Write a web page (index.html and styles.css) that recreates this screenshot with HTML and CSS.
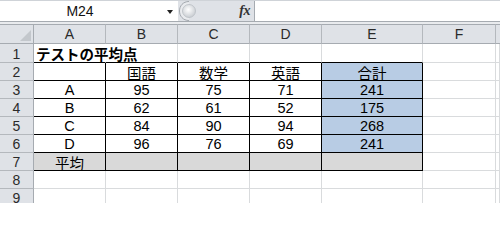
FILE: index.html
```html
<!DOCTYPE html>
<html lang="ja">
<head>
<meta charset="utf-8">
<link rel="stylesheet" href="styles.css">
</head>
<body>
<div class="app">
  <div class="fbar">
    <div class="namebox"><span class="ref">M24</span><span class="arrow"></span></div>
    <div class="pill">
      <svg class="bubble" width="20" height="20" viewBox="0 0 20 20">
        <defs>
          <radialGradient id="g" cx="0.45" cy="0.4" r="0.6">
            <stop offset="0" stop-color="#ffffff"/>
            <stop offset="1" stop-color="#c9cdd2"/>
          </radialGradient>
        </defs>
        <path d="M11 0.5 C5 0.5 1.5 5 1.5 10 C1.5 15 5 19.5 11 19.5" fill="#e9ebee" stroke="#a3a8ae" stroke-width="1"/>
        <circle cx="11" cy="10" r="6.5" fill="url(#g)" stroke="#b9bec3" stroke-width="0.8"/>
      </svg>
      <span class="fx">fx</span>
    </div>
    <div class="input"></div>
  </div>
  <div class="gap"></div>
  <div class="sheet">
    <div class="h corner"><span class="tri"></span></div>
    <div class="h">A</div><div class="h">B</div><div class="h">C</div><div class="h">D</div><div class="h">E</div><div class="h">F</div><div class="h last"></div>

    <div class="rh">1</div>
    <div class="c bb a1"><span class="title">テストの平均点</span></div><div class="c bb"></div><div class="c bb"></div><div class="c bb"></div><div class="c bb"></div><div class="c"></div><div class="c"></div>

    <div class="rh">2</div>
    <div class="c b"></div><div class="c b">国語</div><div class="c b">数学</div><div class="c b">英語</div><div class="c b blue">合計</div><div class="c"></div><div class="c"></div>

    <div class="rh">3</div>
    <div class="c b">A</div><div class="c b">95</div><div class="c b">75</div><div class="c b">71</div><div class="c b blue">241</div><div class="c"></div><div class="c"></div>

    <div class="rh">4</div>
    <div class="c b">B</div><div class="c b">62</div><div class="c b">61</div><div class="c b">52</div><div class="c b blue">175</div><div class="c"></div><div class="c"></div>

    <div class="rh">5</div>
    <div class="c b">C</div><div class="c b">84</div><div class="c b">90</div><div class="c b">94</div><div class="c b blue">268</div><div class="c"></div><div class="c"></div>

    <div class="rh">6</div>
    <div class="c b">D</div><div class="c b">96</div><div class="c b">76</div><div class="c b">69</div><div class="c b blue">241</div><div class="c"></div><div class="c"></div>

    <div class="rh">7</div>
    <div class="c b gray">平均</div><div class="c b gray"></div><div class="c b gray"></div><div class="c b gray"></div><div class="c b gray"></div><div class="c"></div><div class="c"></div>

    <div class="rh">8</div>
    <div class="c"></div><div class="c"></div><div class="c"></div><div class="c"></div><div class="c"></div><div class="c"></div><div class="c"></div>

    <div class="rh">9</div>
    <div class="c"></div><div class="c"></div><div class="c"></div><div class="c"></div><div class="c"></div><div class="c"></div><div class="c"></div>
  </div>
</div>
</body>
</html>
```

FILE: styles.css
```css
html, body {
  margin: 0;
  padding: 0;
  background: #ffffff;
  overflow: hidden;
}

.app {
  width: 500px;
  height: 203px;
  overflow: hidden;
  font-family: "Liberation Sans", "Noto Sans CJK JP", sans-serif;
  font-size: 14.5px;
  color: #000;
}

/* formula bar */
.fbar {
  display: flex;
  height: 21px;
  box-sizing: border-box;
  padding-top: 1px;
  background: #dfe2e7;
  border-top: 1px solid #cfd3d8;
  border-bottom: 1px solid #a6abb1;
  box-sizing: content-box;
  height: 20px;
  padding-top: 0;
}

.namebox {
  width: 178px;
  height: 20px;
  background: #ffffff;
  display: flex;
  align-items: center;
  position: relative;
}

.ref {
  width: 160px;
  text-align: center;
  font-size: 14px;
  color: #111;
}

.arrow {
  position: absolute;
  left: 167px;
  top: 9px;
  width: 0;
  height: 0;
  border-left: 3.5px solid transparent;
  border-right: 3.5px solid transparent;
  border-top: 4px solid #222;
}

.pill {
  width: 77px;
  height: 20px;
  display: flex;
  align-items: center;
  justify-content: space-between;
  background: #dfe2e7;
  border-right: 1px solid #a6abb1;
  box-sizing: border-box;
}

.bubble {
  display: block;
}

.fx {
  font-family: "Liberation Serif", serif;
  font-style: italic;
  font-weight: bold;
  font-size: 14px;
  color: #333;
  margin-right: 4px;
  letter-spacing: -0.5px;
}

.input {
  flex: 1;
  height: 20px;
  background: #ffffff;
}

.gap {
  height: 2px;
  background: #e9ebee;
}

/* sheet */
.sheet {
  display: grid;
  grid-template-columns: 34px 72px 72px 72px 72px 101px 73px 1fr;
  grid-template-rows: 20px 19px repeat(8, 18px);
}

.h {
  box-sizing: border-box;
  background: #dfe2e7;
  border-top: 1px solid #a6abb1;
  border-right: 1px solid #b4b8bd;
  border-bottom: 1px solid #a6abb1;
  display: flex;
  align-items: center;
  justify-content: center;
  color: #2a2a2a;
  font-size: 14px;
}

.h.last {
  border-right: none;
}

.corner {
  position: relative;
  border-right-color: #a6abb1;
}

.tri {
  position: absolute;
  right: 2px;
  bottom: 2px;
  width: 0;
  height: 0;
  border-left: 11px solid transparent;
  border-bottom: 11px solid #c3c7cc;
}

.rh {
  box-sizing: border-box;
  background: #dfe2e7;
  border-right: 1px solid #a6abb1;
  border-bottom: 1px solid #b4b8bd;
  display: flex;
  align-items: center;
  justify-content: center;
  color: #2a2a2a;
  font-size: 14px;
  padding-top: 1px;
}

.c {
  box-sizing: border-box;
  border-right: 1px solid #d9dbdd;
  border-bottom: 1px solid #d9dbdd;
  display: flex;
  align-items: center;
  justify-content: center;
  white-space: nowrap;
  padding-top: 1px;
}

.c.bb {
  border-bottom-color: #000;
}

.c.b {
  border-right-color: #000;
  border-bottom-color: #000;
}

.c.a1 {
  justify-content: flex-start;
  border-right-color: #ffffff;
  overflow: visible;
  padding-left: 2px;
}

.title {
  font-family: "Noto Sans CJK JP", sans-serif;
  font-weight: bold;
  font-size: 14.5px;
}

.blue {
  background: #b8cce4;
}

.gray {
  background: #d9d9d9;
}
```
